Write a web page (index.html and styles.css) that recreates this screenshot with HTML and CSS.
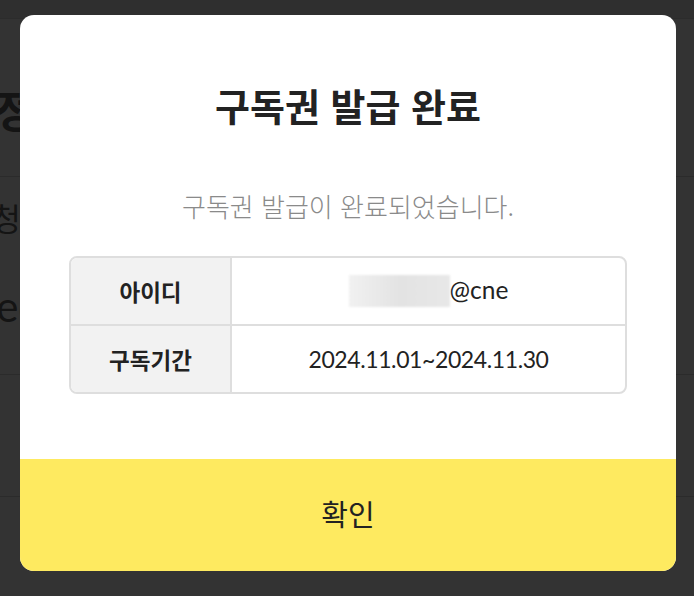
FILE: index.html
```html
<!DOCTYPE html>
<html lang="ko">
<head>
<meta charset="utf-8">
<title>구독권 발급 완료</title>
<link rel="stylesheet" href="styles.css">
</head>
<body>
<div class="page">
  <div class="page-top"></div>
  <div class="page-row page-head"><span class="page-title">세정</span></div>
  <div class="page-row page-info">
    <span class="page-label">추청</span>
    <span class="page-value">eed</span>
  </div>
  <div class="page-row page-empty"></div>
  <div class="page-row page-empty2"></div>
</div>

<div class="modal">
  <div class="modal-body">
    <h1 class="modal-title">구독권 발급 완료</h1>
    <p class="modal-desc">구독권 발급이 완료되었습니다.</p>
    <table class="info-table">
      <tr>
        <th>아이디</th>
        <td><span class="masked"></span><span class="mail">@cne</span></td>
      </tr>
      <tr>
        <th>구독기간</th>
        <td>2024.11.01~2024.11.30</td>
      </tr>
    </table>
  </div>
  <button class="modal-btn" type="button">확인</button>
</div>
</body>
</html>
```

FILE: styles.css
```css
* { box-sizing: border-box; }

html, body {
  margin: 0;
  padding: 0;
  width: 694px;
  height: 596px;
  overflow: hidden;
  background: #333333;
  font-family: "Noto Sans CJK KR", "Noto Sans", sans-serif;
}

.page {
  display: flex;
  flex-direction: column;
  color: #141414;
}

.page-top {
  height: 19px;
  background: #2f2f2f;
  border-bottom: 1px solid #2c2c2c;
}

.page-row {
  border-bottom: 1px solid #2b2b2b;
}

.page-head {
  height: 158px;
  display: flex;
  align-items: center;
}

.page-title {
  font-size: 44px;
  font-weight: 700;
  margin-left: -46px;
  margin-top: 22px;
}

.page-info {
  height: 198px;
  display: flex;
  flex-direction: column;
  padding-top: 20px;
  gap: 46px;
}

.page-label {
  font-size: 32px;
  line-height: 1.3;
  margin-left: -38px;
}

.page-value {
  font-family: "Lato", sans-serif;
  font-size: 42px;
  margin-left: -26px;
  line-height: 1;
}

.page-empty { height: 122px; }
.page-empty2 { height: 99px; border-bottom: none; }

.modal {
  position: absolute;
  left: 20px;
  top: 15px;
  width: 656px;
  height: 556px;
  background: #ffffff;
  border-radius: 14px;
  overflow: hidden;
  display: flex;
  flex-direction: column;
}

.modal-body {
  flex: 1;
  display: flex;
  flex-direction: column;
  align-items: center;
  padding: 67px 49px 0;
}

.modal-title {
  margin: 0;
  font-size: 38px;
  font-weight: 700;
  line-height: 1.2;
  color: #222222;
}

.modal-desc {
  margin: 62px 0 0;
  font-size: 26px;
  font-weight: 300;
  line-height: 1.2;
  color: #8a8a8a;
}

.info-table {
  margin-top: 35px;
  width: 558px;
  border-collapse: separate;
  border-spacing: 0;
  border: 2px solid #dedede;
  border-radius: 8px;
  overflow: hidden;
}

.info-table th,
.info-table td {
  height: 66px;
  color: #222222;
  text-align: center;
  padding: 0;
}

.info-table th {
  width: 161px;
  background: #f2f2f2;
  font-size: 22.5px;
  font-weight: 700;
  border-right: 2px solid #dedede;
}

.info-table td {
  font-family: "Lato", "Noto Sans CJK KR", sans-serif;
  font-size: 23px;
  letter-spacing: -0.4px;
}

.info-table tr:first-child th,
.info-table tr:first-child td {
  height: 68px;
  border-bottom: 2px solid #dedede;
}

.masked {
  display: inline-block;
  width: 101px;
  height: 32px;
  vertical-align: middle;
  margin-top: -4px;
  background: linear-gradient(90deg, #f1f1f1 0%, #e3e3e3 50%, #e8e8e8 100%);
  filter: blur(1px);
}

.mail {
  font-size: 24.5px;
  letter-spacing: 0;
}

.modal-btn {
  height: 112px;
  width: 100%;
  border: none;
  background: #feea60;
  font-family: "Noto Sans CJK KR", sans-serif;
  font-size: 29px;
  color: #222222;
  padding: 0 0 4px;
  cursor: pointer;
}
```
